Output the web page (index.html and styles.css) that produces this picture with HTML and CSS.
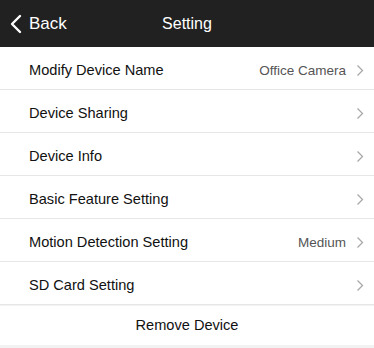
FILE: index.html
```html
<!DOCTYPE html>
<html lang="en">
<head>
  <meta charset="UTF-8" />
  <meta name="viewport" content="width=device-width, initial-scale=1.0" />
  <title>Setting</title>
  <link rel="stylesheet" href="styles.css">
</head>
<body>
  <div class="nav-bar">
    <div class="nav-back">
      <svg class="back-icon" width="12" height="20" viewBox="0 0 12 20">
        <path d="M10 2 L2 10 L10 18" fill="none" stroke="#fff" stroke-width="2.4" stroke-linecap="round" stroke-linejoin="round"/>
      </svg>
      <span>Back</span>
    </div>
    <div class="nav-title">Setting</div>
  </div>

  <div class="list">
    <div class="row">
      <span class="row-label">Modify Device Name</span>
      <span class="row-value">Office Camera</span>
      <svg class="chevron" width="8" height="13" viewBox="0 0 8 13"><path d="M1.5 1.5 L6.5 6.5 L1.5 11.5" fill="none" stroke="#a8a8a8" stroke-width="1.3"/></svg>
    </div>
    <div class="row">
      <span class="row-label">Device Sharing</span>
      <svg class="chevron" width="8" height="13" viewBox="0 0 8 13"><path d="M1.5 1.5 L6.5 6.5 L1.5 11.5" fill="none" stroke="#a8a8a8" stroke-width="1.3"/></svg>
    </div>
    <div class="row">
      <span class="row-label">Device Info</span>
      <svg class="chevron" width="8" height="13" viewBox="0 0 8 13"><path d="M1.5 1.5 L6.5 6.5 L1.5 11.5" fill="none" stroke="#a8a8a8" stroke-width="1.3"/></svg>
    </div>
    <div class="row">
      <span class="row-label">Basic Feature Setting</span>
      <svg class="chevron" width="8" height="13" viewBox="0 0 8 13"><path d="M1.5 1.5 L6.5 6.5 L1.5 11.5" fill="none" stroke="#a8a8a8" stroke-width="1.3"/></svg>
    </div>
    <div class="row">
      <span class="row-label">Motion Detection Setting</span>
      <span class="row-value">Medium</span>
      <svg class="chevron" width="8" height="13" viewBox="0 0 8 13"><path d="M1.5 1.5 L6.5 6.5 L1.5 11.5" fill="none" stroke="#a8a8a8" stroke-width="1.3"/></svg>
    </div>
    <div class="row">
      <span class="row-label">SD Card Setting</span>
      <svg class="chevron" width="8" height="13" viewBox="0 0 8 13"><path d="M1.5 1.5 L6.5 6.5 L1.5 11.5" fill="none" stroke="#a8a8a8" stroke-width="1.3"/></svg>
    </div>
  </div>

  <div class="remove-btn">Remove Device</div>
</body>
</html>
```

FILE: styles.css
```css
body {
  margin: 0;
  background-color: #f2f2f2;
  font-family: 'Liberation Sans', Arial, sans-serif;
  color: #111;
}
.nav-bar {
  height: 47px;
  background-color: #212121;
  display: flex;
  align-items: center;
  position: relative;
  color: #fff;
}
.nav-back {
  display: flex;
  align-items: center;
  gap: 7px;
  padding-left: 10px;
  font-size: 17px;
}
.back-icon {
  display: block;
}
.nav-title {
  position: absolute;
  left: 0;
  right: 0;
  text-align: center;
  font-size: 16px;
  pointer-events: none;
}
.list {
  background: #fff;
}
.row {
  height: 38px;
  padding: 4px 10px 0 29px;
  display: flex;
  align-items: center;
  border-bottom: 1px solid #e6e6e6;
  font-size: 14.6px;
}
.row-label {
  flex: 1;
}
.row-value {
  color: #555;
  font-size: 13.5px;
  margin-right: 10px;
}
.chevron {
  display: block;
}
.remove-btn {
  margin-top: 1px;
  height: 38px;
  padding-bottom: 1px;
  background: #fff;
  display: flex;
  align-items: center;
  justify-content: center;
  font-size: 14.6px;
}
```
